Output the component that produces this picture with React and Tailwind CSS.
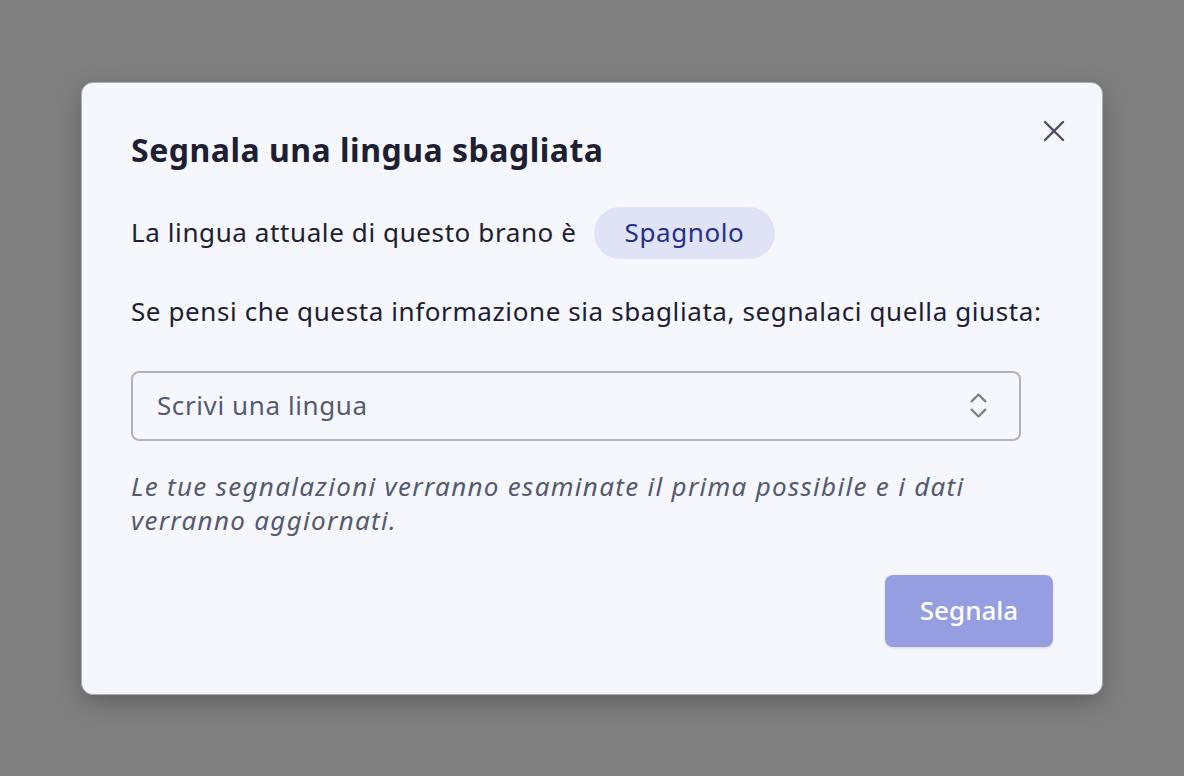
import { ChevronsUpDown } from "lucide-react";

export default function App() {
  return (
    <div
      className="min-h-screen w-full bg-[#808080] flex items-center justify-center"
      style={{ fontFamily: '"Noto Sans", "Open Sans", sans-serif' }}
    >
      <div className="relative w-[1022px] h-[613px] bg-[#f5f7fc] border border-[#a9abba] rounded-xl shadow-[0_8px_24px_rgba(0,0,0,0.25)] px-[49px] pt-[47px] pb-[47px] flex flex-col">
        <button className="absolute top-[36px] right-[36px] text-[#4a4e60]">
          <svg width="24" height="24" viewBox="0 0 24 24" fill="none" stroke="currentColor" strokeWidth="2.4" strokeLinecap="round">
            <path d="M3 3l18 18M21 3L3 21" />
          </svg>
        </button>

        <h2 className="text-[32px] font-bold tracking-[0.5px] text-[#1d2033] leading-[40px]">
          Segnala una lingua sbagliata
        </h2>

        <div className="mt-[37px] flex items-center gap-[17px] text-[26px] tracking-[0.6px] text-[#1d2033]">
          <span>La lingua attuale di questo brano è</span>
          <span className="h-[52px] px-[31px] rounded-full bg-[#dfe3f5] text-[#26308a] flex items-center">
            Spagnolo
          </span>
        </div>

        <p className="mt-[34px] text-[26px] tracking-[0.6px] text-[#1d2033] leading-[36px]">
          Se pensi che questa informazione sia sbagliata, segnalaci quella giusta:
        </p>

        <div className="mt-[42px] w-[890px] h-[70px] border-2 border-[#b0b3c7] rounded-lg flex items-center justify-between pl-[24px] pr-[24px]">
          <span className="text-[26px] tracking-[0.6px] text-[#555a70]">Scrivi una lingua</span>
          <ChevronsUpDown className="w-[33px] h-[33px] text-[#7a7d8c]" strokeWidth={1.6} />
        </div>

        <p className="mt-[28px] w-[870px] text-[26px] italic tracking-[1.3px] text-[#555a70] leading-[34px]">
          Le tue segnalazioni verranno esaminate il prima possibile e i dati verranno aggiornati.
        </p>

        <div className="mt-auto flex justify-end">
          <button className="w-[168px] h-[72px] rounded-lg bg-[#959ee0] text-white text-[26px] font-medium shadow-sm">
            Segnala
          </button>
        </div>
      </div>
    </div>
  );
}
